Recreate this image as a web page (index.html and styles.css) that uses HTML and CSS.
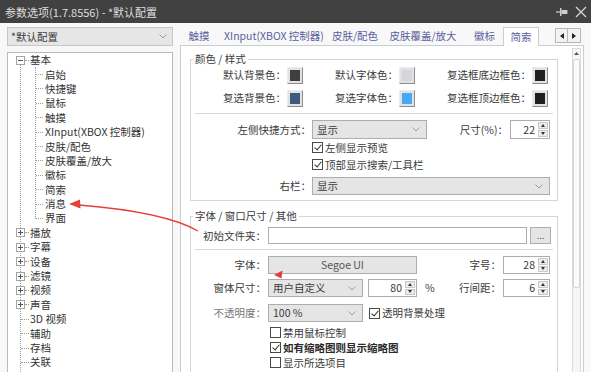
FILE: index.html
```html
<!DOCTYPE html>
<html lang="zh">
  <head>
    <meta charset="UTF-8" />
    <meta name="viewport" content="width=device-width, initial-scale=1.0" />
    <title>参数选项</title>
    <link rel="stylesheet" href="styles.css">
  </head>
  <body>
    <div class="titlebar">
      <span class="title">参数选项(1.7.8556) - *默认配置</span>
      <div class="win-btns">
        <svg width="12" height="10" viewBox="0 0 12 10"><path d="M0 5h4" stroke="#cfcfcf" stroke-width="1.2"/><rect x="4" y="1" width="1.4" height="8" fill="#cfcfcf"/><rect x="5.4" y="3" width="6" height="4" fill="#cfcfcf"/></svg>
        <svg width="12" height="12" viewBox="0 0 12 12"><path d="M1 1l10 10M11 1L1 11" stroke="#d6d6d6" stroke-width="1.3"/></svg>
      </div>
    </div>

    <div class="main">
      <div class="side">
        <div class="profile">
          <span>*默认配置</span>
          <svg class="chev" width="8" height="5" viewBox="0 0 8 5"><path d="M0.5 0.5l3.5 3.5 3.5-3.5" fill="none" stroke="#9a9a9a"/></svg>
        </div>
        <div class="tree">
          <div class="row top"><span class="exp minus"></span><span class="dash"></span>基本</div>
          <div class="kids">
            <div class="row kid"><span class="dash"></span>启始</div>
            <div class="row kid"><span class="dash"></span>快捷键</div>
            <div class="row kid"><span class="dash"></span>鼠标</div>
            <div class="row kid"><span class="dash"></span>触摸</div>
            <div class="row kid"><span class="dash"></span>XInput(XBOX 控制器)</div>
            <div class="row kid"><span class="dash"></span>皮肤/配色</div>
            <div class="row kid"><span class="dash"></span>皮肤覆盖/放大</div>
            <div class="row kid"><span class="dash"></span>徽标</div>
            <div class="row kid"><span class="dash"></span>简索</div>
            <div class="row kid"><span class="dash"></span>消息</div>
            <div class="row kid"><span class="dash"></span>界面</div>
          </div>
          <div class="row top"><span class="exp plus"></span><span class="dash"></span>播放</div>
          <div class="row top"><span class="exp plus"></span><span class="dash"></span>字幕</div>
          <div class="row top"><span class="exp plus"></span><span class="dash"></span>设备</div>
          <div class="row top"><span class="exp plus"></span><span class="dash"></span>滤镜</div>
          <div class="row top"><span class="exp plus"></span><span class="dash"></span>视频</div>
          <div class="row top"><span class="exp plus"></span><span class="dash"></span>声音</div>
          <div class="row leaf"><span class="dash"></span>3D 视频</div>
          <div class="row leaf"><span class="dash"></span>辅助</div>
          <div class="row leaf"><span class="dash"></span>存档</div>
          <div class="row leaf"><span class="dash"></span>关联</div>
          <div class="row leaf"><span class="dash"></span>配置</div>
        </div>
      </div>

      <div class="content">
        <div class="tabs">
          <div class="tab" style="width:38px">触摸</div>
          <div class="tab" style="width:112px">XInput(XBOX 控制器)</div>
          <div class="tab" style="width:50px">皮肤/配色</div>
          <div class="tab" style="width:86px">皮肤覆盖/放大</div>
          <div class="tab" style="width:37px">徽标</div>
          <div class="tab active" style="width:36px">简索</div>
          <div class="tab-scroll">
            <span class="ts-btn"><svg width="4" height="6" viewBox="0 0 4 6"><path d="M4 0v6L0 3z" fill="#222"/></svg></span>
            <span class="ts-btn"><svg width="4" height="6" viewBox="0 0 4 6"><path d="M0 0v6l4-3z" fill="#222"/></svg></span>
          </div>
        </div>

        <div class="panel">
          <div class="scroll-area">
            <fieldset class="group g1">
              <legend>颜色 / 样式</legend>
              <div class="colors">
                <div class="color-item">默认背景色：<span class="swatch" style="background:#3e3e43"></span></div>
                <div class="color-item">默认字体色：<span class="swatch" style="background:#d5d5dc"></span></div>
                <div class="color-item">复选框底边框色：<span class="swatch" style="background:#1f1f1f"></span></div>
                <div class="color-item">复选背景色：<span class="swatch" style="background:#3d5b7d"></span></div>
                <div class="color-item">复选字体色：<span class="swatch" style="background:#47a9f5"></span></div>
                <div class="color-item">复选框顶边框色：<span class="swatch" style="background:#1f1f1f"></span></div>
              </div>
              <div class="sep"></div>
              <div class="row-f r-shortcut">
                <span class="lbl">左侧快捷方式：</span>
                <div class="select" style="width:115px"><span>显示</span><svg width="8" height="5" viewBox="0 0 8 5"><path d="M0.5 0.5l3.5 3.5 3.5-3.5" fill="none" stroke="#9a9a9a"/></svg></div>
                <span class="lbl-r">尺寸(%)：</span>
                <div class="spin" style="width:40px"><span class="val">22</span><span class="arrows"><i class="up"></i><i class="down"></i></span></div>
              </div>
              <label class="check"><span class="box on"></span>左侧显示预览</label>
              <label class="check"><span class="box on"></span>顶部显示搜索/工具栏</label>
              <div class="row-f r-right">
                <span class="lbl">右栏：</span>
                <div class="select grow"><span>显示</span><svg width="8" height="5" viewBox="0 0 8 5"><path d="M0.5 0.5l3.5 3.5 3.5-3.5" fill="none" stroke="#9a9a9a"/></svg></div>
              </div>
            </fieldset>

            <fieldset class="group g2">
              <legend>字体 / 窗口尺寸 / 其他</legend>
              <div class="row-f r-folder">
                <span class="lbl">初始文件夹：</span>
                <div class="input grow"></div>
                <div class="btn dots">...</div>
              </div>
              <div class="sep"></div>
              <div class="row-f r-font">
                <span class="lbl">字体：</span>
                <div class="btn" style="width:149px">Segoe UI</div>
                <span class="lbl-r">字号：</span>
                <div class="spin" style="width:47px"><span class="val">28</span><span class="arrows"><i class="up"></i><i class="down"></i></span></div>
              </div>
              <div class="row-f r-size">
                <span class="lbl">窗体尺寸：</span>
                <div class="select" style="width:95px"><span>用户自定义</span><svg width="8" height="5" viewBox="0 0 8 5"><path d="M0.5 0.5l3.5 3.5 3.5-3.5" fill="none" stroke="#9a9a9a"/></svg></div>
                <div class="spin pct" style="width:49px"><span class="val">80</span><span class="arrows"><i class="up"></i><i class="down"></i></span></div>
                <span class="unit">%</span>
                <span class="lbl-r">行间距：</span>
                <div class="spin" style="width:47px"><span class="val">6</span><span class="arrows"><i class="up"></i><i class="down"></i></span></div>
              </div>
              <div class="row-f r-opacity">
                <span class="lbl dim">不透明度：</span>
                <div class="select" style="width:95px"><span>100 %</span><svg width="8" height="5" viewBox="0 0 8 5"><path d="M0.5 0.5l3.5 3.5 3.5-3.5" fill="none" stroke="#9a9a9a"/></svg></div>
                <label class="check inline"><span class="box on"></span>透明背景处理</label>
              </div>
              <div class="checks">
                <label class="check"><span class="box"></span>禁用鼠标控制</label>
                <label class="check bold"><span class="box on"></span>如有缩略图则显示缩略图</label>
                <label class="check"><span class="box"></span>显示所选项目</label>
              </div>
            </fieldset>
          </div>
          <div class="vscroll">
            <div class="vs-up"><svg width="5" height="3" viewBox="0 0 5 3"><path d="M0 3h5L2.5 0z" fill="#555"/></svg></div>
            <div class="vs-thumb"></div>
          </div>
        </div>
      </div>
    </div>

    <svg class="marks" width="591" height="372" viewBox="0 0 591 372">
      <path d="M198 231Q165 212 79 205" fill="none" stroke="#e5403a" stroke-width="1.4"/>
      <path d="M69 204L80 199.5 80.5 208.5z" fill="#e5403a"/>
      <path d="M274 275L282.5 270.5 281.5 278.5z" fill="#e5403a"/>
    </svg>
  </body>
</html>
```

FILE: styles.css
```css
* {
  box-sizing: border-box;
}

body {
  margin: 0;
  width: 591px;
  height: 372px;
  overflow: hidden;
  position: relative;
  background: #f8f8f8;
  font-family: "Noto Sans CJK SC", sans-serif;
  font-size: 10.5px;
  line-height: 14px;
  color: #3a3a3a;
}

.titlebar {
  height: 23px;
  background: #414141;
  color: #dedede;
  display: flex;
  align-items: center;
  padding: 0 4px 0 5px;
  font-size: 11px;
}

.titlebar .title {
  flex: 1;
}

.win-btns {
  display: flex;
  align-items: center;
  gap: 7px;
}

.main {
  display: flex;
  height: 349px;
}

/* left column */
.side {
  width: 180px;
  padding-left: 7px;
  display: flex;
  flex-direction: column;
}

.profile {
  margin-top: 4px;
  width: 166px;
  height: 19px;
  background: #e6e6e6;
  border: 1px solid #c6c6c6;
  display: flex;
  align-items: center;
  justify-content: space-between;
  padding: 0 5px 0 3px;
}

.tree {
  position: relative;
  margin-top: 6px;
  width: 166px;
  flex: 1;
  background: #fff;
  border: 1px solid #b9b9b9;
  border-bottom: none;
  overflow: hidden;
  color: #333;
}

.tree::before {
  content: "";
  position: absolute;
  left: 12px;
  top: 7px;
  bottom: 0;
  border-left: 1px dotted #9c9c9c;
}

.tree .row {
  height: 14.4px;
  display: flex;
  align-items: center;
  white-space: nowrap;
}

.row.top {
  padding-left: 8px;
}

.row.leaf {
  padding-left: 13px;
}

.row.kid {
  padding-left: 28px;
}

.dash {
  height: 0;
  width: 4px;
  border-top: 1px dotted #9c9c9c;
  margin-right: 1px;
}

.row.leaf .dash {
  width: 8px;
}

.row.kid .dash {
  width: 7px;
  margin-right: 2px;
}

.kids {
  position: relative;
}

.kids::before {
  content: "";
  position: absolute;
  left: 27px;
  top: 0;
  bottom: 7px;
  border-left: 1px dotted #9c9c9c;
}

.exp {
  position: relative;
  width: 9px;
  height: 9px;
  border: 1px solid #a4a4a4;
  background: #fff;
  z-index: 1;
}

.exp::before {
  content: "";
  position: absolute;
  left: 1px;
  top: 3px;
  width: 5px;
  height: 1px;
  background: #555;
}

.exp.plus::after {
  content: "";
  position: absolute;
  left: 3px;
  top: 1px;
  width: 1px;
  height: 5px;
  background: #555;
}

/* right column */
.content {
  width: 404px;
  display: flex;
  flex-direction: column;
}

.tabs {
  height: 22px;
  display: flex;
  align-items: flex-end;
}

.tab {
  height: 18px;
  line-height: 18px;
  text-align: center;
  white-space: nowrap;
  color: #5b5d9f;
}

.tab.active {
  position: relative;
  z-index: 1;
  height: 19px;
  margin-bottom: -1px;
  background: #fff;
  border: 1px solid #cdcdcd;
  border-bottom: none;
}

.tab-scroll {
  display: flex;
  align-self: flex-start;
  margin: 5px 3px 0 auto;
}

.ts-btn {
  width: 13px;
  height: 15px;
  display: flex;
  align-items: center;
  justify-content: center;
  background: #f2f2f2;
  border: 1px solid #b8b8b8;
}

.ts-btn + .ts-btn {
  border-left: none;
}

.panel {
  flex: 1;
  display: flex;
  background: #fff;
  border: 1px solid #cdcdcd;
  border-bottom: none;
  overflow: hidden;
}

.scroll-area {
  width: 391px;
  padding: 6px 0 0 9px;
}

.vscroll {
  position: relative;
  width: 9px;
  margin-top: 2px;
  border: 1px solid #dadada;
  border-bottom: none;
  background: #f6f6f6;
}

.vs-up {
  height: 9px;
  display: flex;
  align-items: center;
  justify-content: center;
}

.vs-thumb {
  margin-top: 1px;
  height: 229px;
  background: #fcfcfc;
  border: 1px solid #d4d4d4;
  border-radius: 2px;
}

/* groups */
.group {
  margin: 0;
  padding: 0 0 5px 0;
  width: 368px;
  min-width: 0;
  border: 1px solid #d6d6d6;
}

.group legend {
  margin-left: 2px;
  padding: 0 2px;
  height: 14px;
  line-height: 14px;
}

.g2 {
  margin-top: 8px;
  border-bottom: none;
}

.colors {
  display: grid;
  grid-template-columns: 112px 112px 133px;
  grid-auto-rows: 18px;
  row-gap: 5px;
}

.color-item {
  display: flex;
  align-items: center;
  justify-content: flex-end;
  gap: 1px;
  white-space: nowrap;
}

.swatch {
  width: 16px;
  height: 17px;
  border: 1px solid;
  border-color: #ececec #8c8c8c #8c8c8c #ececec;
  box-shadow: inset 0 0 0 2px #e2e2e2;
}

.sep {
  height: 1px;
  margin: 6px 4px 0 4px;
  background: #d8d8d8;
}

.row-f {
  display: flex;
  align-items: center;
  padding-right: 7px;
  white-space: nowrap;
}

.g1 .lbl {
  width: 121px;
  padding-right: 1px;
  text-align: right;
}

.g2 .lbl {
  width: 77px;
  padding-right: 2px;
  text-align: right;
}

.lbl.dim {
  color: #777;
}

.lbl-r {
  margin-left: auto;
  padding-right: 2px;
}

.r-shortcut {
  margin-top: 6px;
  height: 19px;
}

.r-right {
  margin-top: 4px;
  height: 18px;
}

.r-folder {
  margin-top: 4px;
  height: 17px;
  padding-right: 6px;
}

.g2 .sep {
  margin-top: 5px;
}

.r-font {
  margin-top: 6px;
  height: 18px;
}

.r-size {
  margin-top: 5px;
  height: 18px;
}

.r-opacity {
  margin-top: 7px;
  height: 18px;
}

.grow {
  flex: 1;
}

.select {
  height: 100%;
  display: flex;
  align-items: center;
  justify-content: space-between;
  padding: 0 6px 0 4px;
  background: #e5e5e5;
  border: 1px solid #adadad;
}

.spin {
  height: 100%;
  display: flex;
  background: #fff;
  border: 1px solid #abadb3;
}

.spin.pct {
  margin-left: 5px;
}

.spin .val {
  flex: 1;
  text-align: right;
  padding-right: 3px;
  align-self: center;
}

.spin .arrows {
  width: 10px;
  margin: 1px 1px 1px 0;
  display: flex;
  flex-direction: column;
  gap: 1px;
}

.spin .arrows i {
  flex: 1;
  position: relative;
  background: #ececec;
  border: 1px solid #c9c9c9;
}

.spin .arrows i::after {
  content: "";
  position: absolute;
  left: 2px;
  top: 50%;
  margin-top: -1.5px;
  border-left: 2.5px solid transparent;
  border-right: 2.5px solid transparent;
}

.spin .arrows i.up::after {
  border-bottom: 3px solid #333;
}

.spin .arrows i.down::after {
  border-top: 3px solid #333;
}

.unit {
  margin-left: 8px;
}

.input {
  height: 100%;
  background: #fff;
  border: 1px solid #abadb3;
}

.btn {
  height: 100%;
  display: flex;
  align-items: center;
  justify-content: center;
  background: #e5e5e5;
  border: 1px solid #adadad;
  color: #555;
}

.btn.dots {
  width: 21px;
  margin-left: 3px;
  font-size: 9px;
  line-height: 10px;
}

.check {
  height: 17px;
  display: flex;
  align-items: center;
  gap: 2px;
  padding-left: 121px;
  white-space: nowrap;
}

.check.inline {
  height: auto;
  padding-left: 0;
  margin-left: 6px;
}

.checks {
  margin-top: 3px;
}

.checks .check {
  height: 15px;
  padding-left: 79px;
}

.check.bold {
  font-weight: bold;
  color: #2a2a2a;
}

.box {
  position: relative;
  width: 11px;
  height: 11px;
  border: 1px solid #4a4a4a;
  background: #fff;
}

.box.on::after {
  content: "";
  position: absolute;
  left: 3px;
  top: 0px;
  width: 3px;
  height: 6px;
  border: solid #333;
  border-width: 0 1px 1px 0;
  transform: rotate(40deg);
}

.marks {
  position: absolute;
  left: 0;
  top: 0;
  pointer-events: none;
}
```
